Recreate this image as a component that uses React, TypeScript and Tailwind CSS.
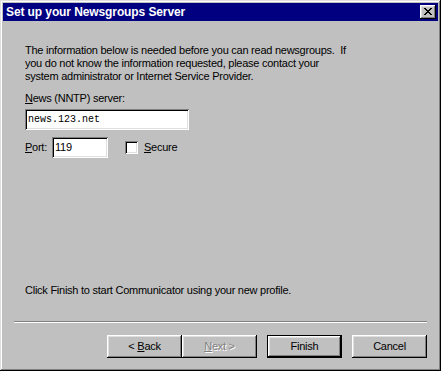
import React from 'react';

const raised =
  'shadow-[inset_-1px_-1px_#000000,inset_1px_1px_#ffffff,inset_-2px_-2px_#808080,inset_2px_2px_#dfdfdf]';
const sunken =
  'shadow-[inset_1px_1px_#808080,inset_-1px_-1px_#ffffff,inset_2px_2px_#000000,inset_-2px_-2px_#dfdfdf]';

const WizardButton: React.FC<{
  children: React.ReactNode;
  isDefault?: boolean;
  disabled?: boolean;
}> = ({ children, isDefault, disabled }) => (
  <div
    className={`w-[75px] h-[23px] ${isDefault ? 'border border-black' : ''}`}
  >
    <div
      className={`w-full h-full flex items-center justify-center bg-[#c0c0c0] ${raised} ${
        disabled ? 'text-[#808080] [text-shadow:1px_1px_#ffffff]' : 'text-black'
      }`}
    >
      {children}
    </div>
  </div>
);

export default function App() {
  return (
    <div
      className="w-[441px] h-[371px] bg-[#c0c0c0] p-[3px] flex flex-col shadow-[inset_-1px_-1px_#000000,inset_1px_1px_#dfdfdf,inset_-2px_-2px_#808080,inset_2px_2px_#ffffff] text-[11px] leading-[13px] tracking-[-0.25px] text-black"
      style={{ fontFamily: '"Liberation Sans", Arial, sans-serif' }}
    >
      {/* Title bar */}
      <div className="h-[18px] bg-[#000080] flex items-center justify-between pl-[3px] pr-[2px] shrink-0">
        <span className="text-white font-bold text-[12px] tracking-[-0.1px]">
          Set up your Newsgroups Server
        </span>
        <div className={`w-[16px] h-[14px] bg-[#c0c0c0] flex items-center justify-center ${raised}`}>
          <svg width="8" height="7" viewBox="0 0 8 7" className="-mt-px">
            <path
              d="M0 0h2v1h1v1h2V1h1V0h2v1H7v1H6v1H5v1h1v1h1v1h1v1H6V6H5V5H3v1H2v1H0V6h1V5h1V4h1V3H2V2H1V1H0z"
              fill="#000"
            />
          </svg>
        </div>
      </div>

      {/* Body */}
      <div className="flex-1 flex flex-col px-[11px] pb-[10px]">
        <div className="pl-[11px] pt-[23px]">
          <p className="whitespace-pre">
            {'The information below is needed before you can read newsgroups.  If\nyou do not know the information requested, please contact your\nsystem administrator or Internet Service Provider.'}
          </p>

          <div className="mt-[9px]">
            <span className="underline">N</span>ews (NNTP) server:
          </div>
          <div
            className={`mt-[4px] w-[164px] h-[21px] bg-white flex items-center pl-[3px] text-[10px] tracking-normal ${sunken}`}
            style={{ fontFamily: '"Liberation Mono", "Courier New", monospace' }}
          >
            news.123.net
          </div>

          <div className="mt-[7px] flex items-center h-[21px]">
            <span className="w-[27px]">
              <span className="underline">P</span>ort:
            </span>
            <div className={`w-[56px] h-[21px] bg-white flex items-center pl-[3px] ${sunken}`}>119</div>
            <div className={`ml-[17px] w-[13px] h-[13px] bg-white ${sunken}`} />
            <span className="ml-[6px]">
              <span className="underline">S</span>ecure
            </span>
          </div>
        </div>

        <p className="mt-auto pl-[11px]">Click Finish to start Communicator using your new profile.</p>

        <div className="mt-[24px] h-[2px] border-t border-t-[#808080] border-b border-b-white" />

        <div className="mt-[12px] flex justify-end items-center">
          <WizardButton>
            &lt; <span className="underline ml-[3px]">B</span>ack
          </WizardButton>
          <WizardButton disabled>
            <span className="underline">N</span>ext &gt;
          </WizardButton>
          <div className="ml-[10px]">
            <WizardButton isDefault>Finish</WizardButton>
          </div>
          <div className="ml-[10px]">
            <WizardButton>Cancel</WizardButton>
          </div>
        </div>
      </div>
    </div>
  );
}
